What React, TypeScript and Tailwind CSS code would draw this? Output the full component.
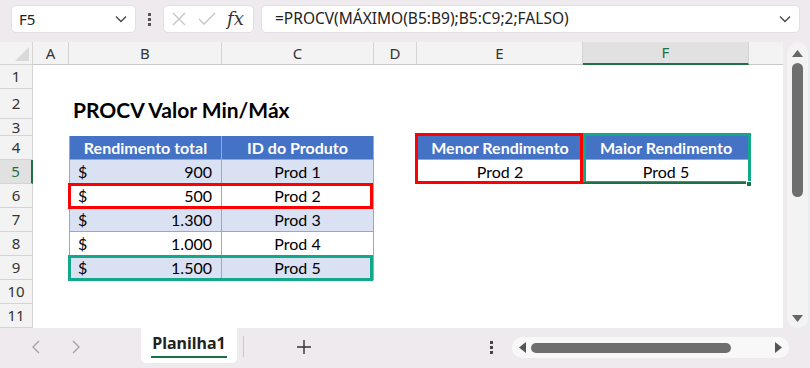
import React from "react";

const ui = "font-['Segoe_UI','Noto_Sans','Open_Sans',sans-serif]";
const cell = "font-['Lato','Carlito','Liberation_Sans',sans-serif]";

const cols = ["A", "B", "C", "D", "E", "F", ""];
const rowHeights = ["h-[24px]", "h-[30px]", "h-[17px]", "h-[24px]", "h-[24px]", "h-[24px]", "h-[24px]", "h-[24px]", "h-[24px]", "h-[24px]", "h-[24px]"];

const data = [
  { v: "900", p: "Prod 1" },
  { v: "500", p: "Prod 2" },
  { v: "1.300", p: "Prod 3" },
  { v: "1.000", p: "Prod 4" },
  { v: "1.500", p: "Prod 5" },
];

function Chevron({ className }: { className?: string }) {
  return (
    <svg width="12" height="8" viewBox="0 0 12 8" className={className}>
      <path d="M1 1.5 L6 6.5 L11 1.5" fill="none" stroke="#444" strokeWidth="1.3" />
    </svg>
  );
}

function Toolbar() {
  return (
    <div className={`flex h-[42px] items-start pt-[5px] ${ui}`}>
      <div className="ml-[11px] flex h-[28px] w-[125px] items-center justify-between rounded-[5px] border border-[#e2dfe2] bg-white pl-[7px] pr-[8px] text-[15px] text-[#222]">
        <span>F5</span>
        <Chevron />
      </div>
      <div className="flex h-[28px] w-[27px] flex-col items-center justify-center gap-[2px]">
        <span className="h-[3px] w-[3px] bg-[#555]" />
        <span className="h-[3px] w-[3px] bg-[#555]" />
        <span className="h-[3px] w-[3px] bg-[#555]" />
      </div>
      <div className="flex h-[28px] w-[91px] items-center rounded-[5px] border border-[#e2dfe2] bg-white pl-[7px]">
        <svg width="16" height="16" viewBox="0 0 16 16">
          <path d="M2 2 L14 14 M14 2 L2 14" stroke="#c4c4c4" strokeWidth="1.3" />
        </svg>
        <svg width="20" height="16" viewBox="0 0 20 16" className="ml-[10px]">
          <path d="M2 8 L7 13 L18 2" fill="none" stroke="#c4c4c4" strokeWidth="1.3" />
        </svg>
        <span className="ml-[10px] font-['DejaVu_Serif','Liberation_Serif',serif] text-[18px] italic leading-none text-[#333]">fx</span>
      </div>
      <div className="ml-[7px] flex h-[28px] w-[539px] items-center justify-between rounded-[5px] border border-[#e2dfe2] bg-white pl-[13px] pr-[8px] text-[15.5px] text-[#222]">
        <span>=PROCV(MÁXIMO(B5:B9);B5:C9;2;FALSO)</span>
        <Chevron />
      </div>
    </div>
  );
}

function ColHeaders() {
  return (
    <>
      <div className="relative border-b border-r border-[#d4d4d4] bg-[#f3f3f3]">
        <svg width="14" height="14" viewBox="0 0 14 14" className="absolute bottom-[3px] right-[3px]">
          <path d="M14 0 L14 14 L0 14 Z" fill="#d9d9d9" />
        </svg>
      </div>
      {cols.map((c, i) => (
        <div
          key={i}
          className={`flex items-center justify-center border-b text-[15px] ${
            c === "F"
              ? "border-b-[2px] border-b-[#1e7145] bg-[#e1e1e1] text-[#1e7145]"
              : "border-b-[#c8c8c8] bg-[#f3f3f3] text-[#333]"
          } ${i < 6 ? "border-r border-r-[#d4d4d4]" : ""}`}
        >
          {c}
        </div>
      ))}
    </>
  );
}

function Sheet() {
  const rows = rowHeights.map((h, idx) => {
    const r = idx + 1;
    const band = r >= 5 && r <= 9 ? ((r - 5) % 2 === 0 ? "bg-[#d9e1f2]" : "bg-white") : "";
    const d = r >= 5 && r <= 9 ? data[r - 5] : null;
    return (
      <React.Fragment key={r}>
        <div
          className={`flex ${h} items-center justify-center border-b text-[15px] ${ui} ${
            r === 5
              ? "border-r-[2px] border-b-[#d4d4d4] border-r-[#1e7145] bg-[#e1e1e1] text-[#1e7145]"
              : "border-r border-[#d4d4d4] bg-[#f3f3f3] text-[#333]"
          } ${r === 3 ? "items-end leading-[15px]" : ""} overflow-hidden`}
        >
          {r}
        </div>
        {/* A */}
        <div className={h} />
        {/* B */}
        {r === 2 ? (
          <div className={`${h} relative`}>
            <span className={`absolute left-[4px] top-[5px] whitespace-nowrap text-[21px] font-bold text-black ${cell}`}>
              PROCV Valor Min/Máx
            </span>
          </div>
        ) : r === 4 ? (
          <div className={`flex ${h} items-center justify-center border-b border-l border-r border-[#8ea9db] bg-[#4472c4] text-[16px] font-bold text-white ${cell}`}>
            Rendimento total
          </div>
        ) : d ? (
          <div className={`flex ${h} items-center justify-between border-b border-l border-r border-[#8ea9db] pl-[8px] pr-[9px] text-[16px] text-black ${band} ${cell}`}>
            <span>$</span>
            <span>{d.v}</span>
          </div>
        ) : (
          <div className={h} />
        )}
        {/* C */}
        {r === 4 ? (
          <div className={`flex ${h} items-center justify-center border-b border-r border-[#8ea9db] bg-[#4472c4] text-[16px] font-bold text-white ${cell}`}>
            ID do Produto
          </div>
        ) : d ? (
          <div className={`flex ${h} items-center justify-center border-b border-r border-[#8ea9db] text-[16px] text-black ${band} ${cell}`}>
            {d.p}
          </div>
        ) : (
          <div className={h} />
        )}
        {/* D */}
        <div className={h} />
        {/* E, F */}
        {r === 4 ? (
          <>
            <div className={`flex ${h} items-center justify-center border-b border-[#8ea9db] bg-[#4472c4] text-[16px] font-bold text-white ${cell}`}>
              Menor Rendimento
            </div>
            <div className={`flex ${h} items-center justify-center border-b border-[#8ea9db] bg-[#4472c4] text-[16px] font-bold text-white ${cell}`}>
              Maior Rendimento
            </div>
          </>
        ) : r === 5 ? (
          <>
            <div className={`flex ${h} items-center justify-center bg-white text-[16px] text-black ${cell}`}>Prod 2</div>
            <div className={`flex ${h} items-center justify-center bg-white text-[16px] text-black ${cell}`}>Prod 5</div>
          </>
        ) : (
          <>
            <div className={h} />
            <div className={h} />
          </>
        )}
        <div className={h} />
      </React.Fragment>
    );
  });

  return (
    <div className="relative grid h-[286px] w-[783px] grid-cols-[33px_36px_153px_152px_43px_166px_166px_34px] grid-rows-[23px_24px_30px_17px_24px_24px_24px_24px_24px_24px_24px_24px] bg-white">
      <ColHeaders />
      {rows}
      {/* highlight boxes */}
      <div className="absolute left-[68px] top-[141px] h-[26px] w-[305px] border-[3px] border-[#ff0000]" />
      <div className="absolute left-[68px] top-[213px] h-[26px] w-[305px] border-[3px] border-[#12a88a]" />
      <div className="absolute left-[415px] top-[91px] h-[51px] w-[168px] border-[3px] border-[#ff0000]" />
      <div className="absolute left-[583px] top-[91px] h-[51px] w-[168px] border-[3px] border-[#12a88a]" />
      <div className="absolute left-[583px] top-[140px] h-[2px] w-[166px] bg-[#1e7145]" />
      <div className="absolute left-[746px] top-[139px] h-[6px] w-[6px] border border-white bg-[#1e7145]" />
    </div>
  );
}

function VScroll() {
  return (
    <div className="ml-[4px] flex h-[286px] w-[21px] flex-col items-center rounded-[10px] bg-[#f3f3f3] pt-[8px]">
      <svg width="11" height="7" viewBox="0 0 11 7">
        <path d="M5.5 0 L11 7 L0 7 Z" fill="#666" />
      </svg>
      <div className="mt-[6px] h-[134px] w-[11px] rounded-[6px] bg-[#6e6e6e]" />
      <div className="flex-1" />
      <svg width="11" height="7" viewBox="0 0 11 7" className="mb-[6px]">
        <path d="M0 0 L11 0 L5.5 7 Z" fill="#666" />
      </svg>
    </div>
  );
}

function TabBar() {
  return (
    <div className={`flex h-[40px] items-start ${ui}`}>
      <div className="flex h-[38px] w-[139px] items-center pl-[31px] text-[#9a9a9a]">
        <svg width="10" height="14" viewBox="0 0 10 14">
          <path d="M8 1 L2 7 L8 13" fill="none" stroke="#a0a0a0" strokeWidth="1.3" />
        </svg>
        <svg width="10" height="14" viewBox="0 0 10 14" className="ml-[30px]">
          <path d="M2 1 L8 7 L2 13" fill="none" stroke="#a0a0a0" strokeWidth="1.3" />
        </svg>
      </div>
      <div className="ml-[2px] flex h-[35px] w-[96px] flex-col items-center rounded-b-[5px] bg-white pt-[5px]">
        <span className="text-[16px] font-bold leading-[20px] text-[#222]">Planilha1</span>
        <span className="mt-[3px] h-[2px] w-[76px] bg-[#1e7145]" />
      </div>
      <div className="ml-[6px] mt-[8px] h-[21px] w-px bg-[#c8c8c8]" />
      <div className="ml-[52px] flex h-[38px] items-center">
        <svg width="16" height="16" viewBox="0 0 16 16">
          <path d="M8 1 L8 15 M1 8 L15 8" stroke="#333" strokeWidth="1.4" />
        </svg>
      </div>
      <div className="ml-[178px] flex h-[38px] flex-col items-center justify-center gap-[2px]">
        <span className="h-[3px] w-[3px] bg-[#444]" />
        <span className="h-[3px] w-[3px] bg-[#444]" />
        <span className="h-[3px] w-[3px] bg-[#444]" />
      </div>
      <div className="ml-[19px] mt-[9px] flex h-[21px] w-[277px] items-center rounded-[10px] bg-[#f8f8f8] px-[7px]">
        <svg width="7" height="11" viewBox="0 0 7 11">
          <path d="M0 5.5 L7 0 L7 11 Z" fill="#555" />
        </svg>
        <div className="ml-[5px] h-[10px] w-[200px] rounded-[5px] bg-[#6e6e6e]" />
        <div className="flex-1" />
        <svg width="7" height="11" viewBox="0 0 7 11">
          <path d="M7 5.5 L0 0 L0 11 Z" fill="#555" />
        </svg>
      </div>
    </div>
  );
}

export default function App() {
  return (
    <div className="flex h-[368px] w-[810px] flex-col overflow-hidden bg-[#eeeaee]">
      <Toolbar />
      <div className="flex">
        <Sheet />
        <VScroll />
      </div>
      <TabBar />
    </div>
  );
}
